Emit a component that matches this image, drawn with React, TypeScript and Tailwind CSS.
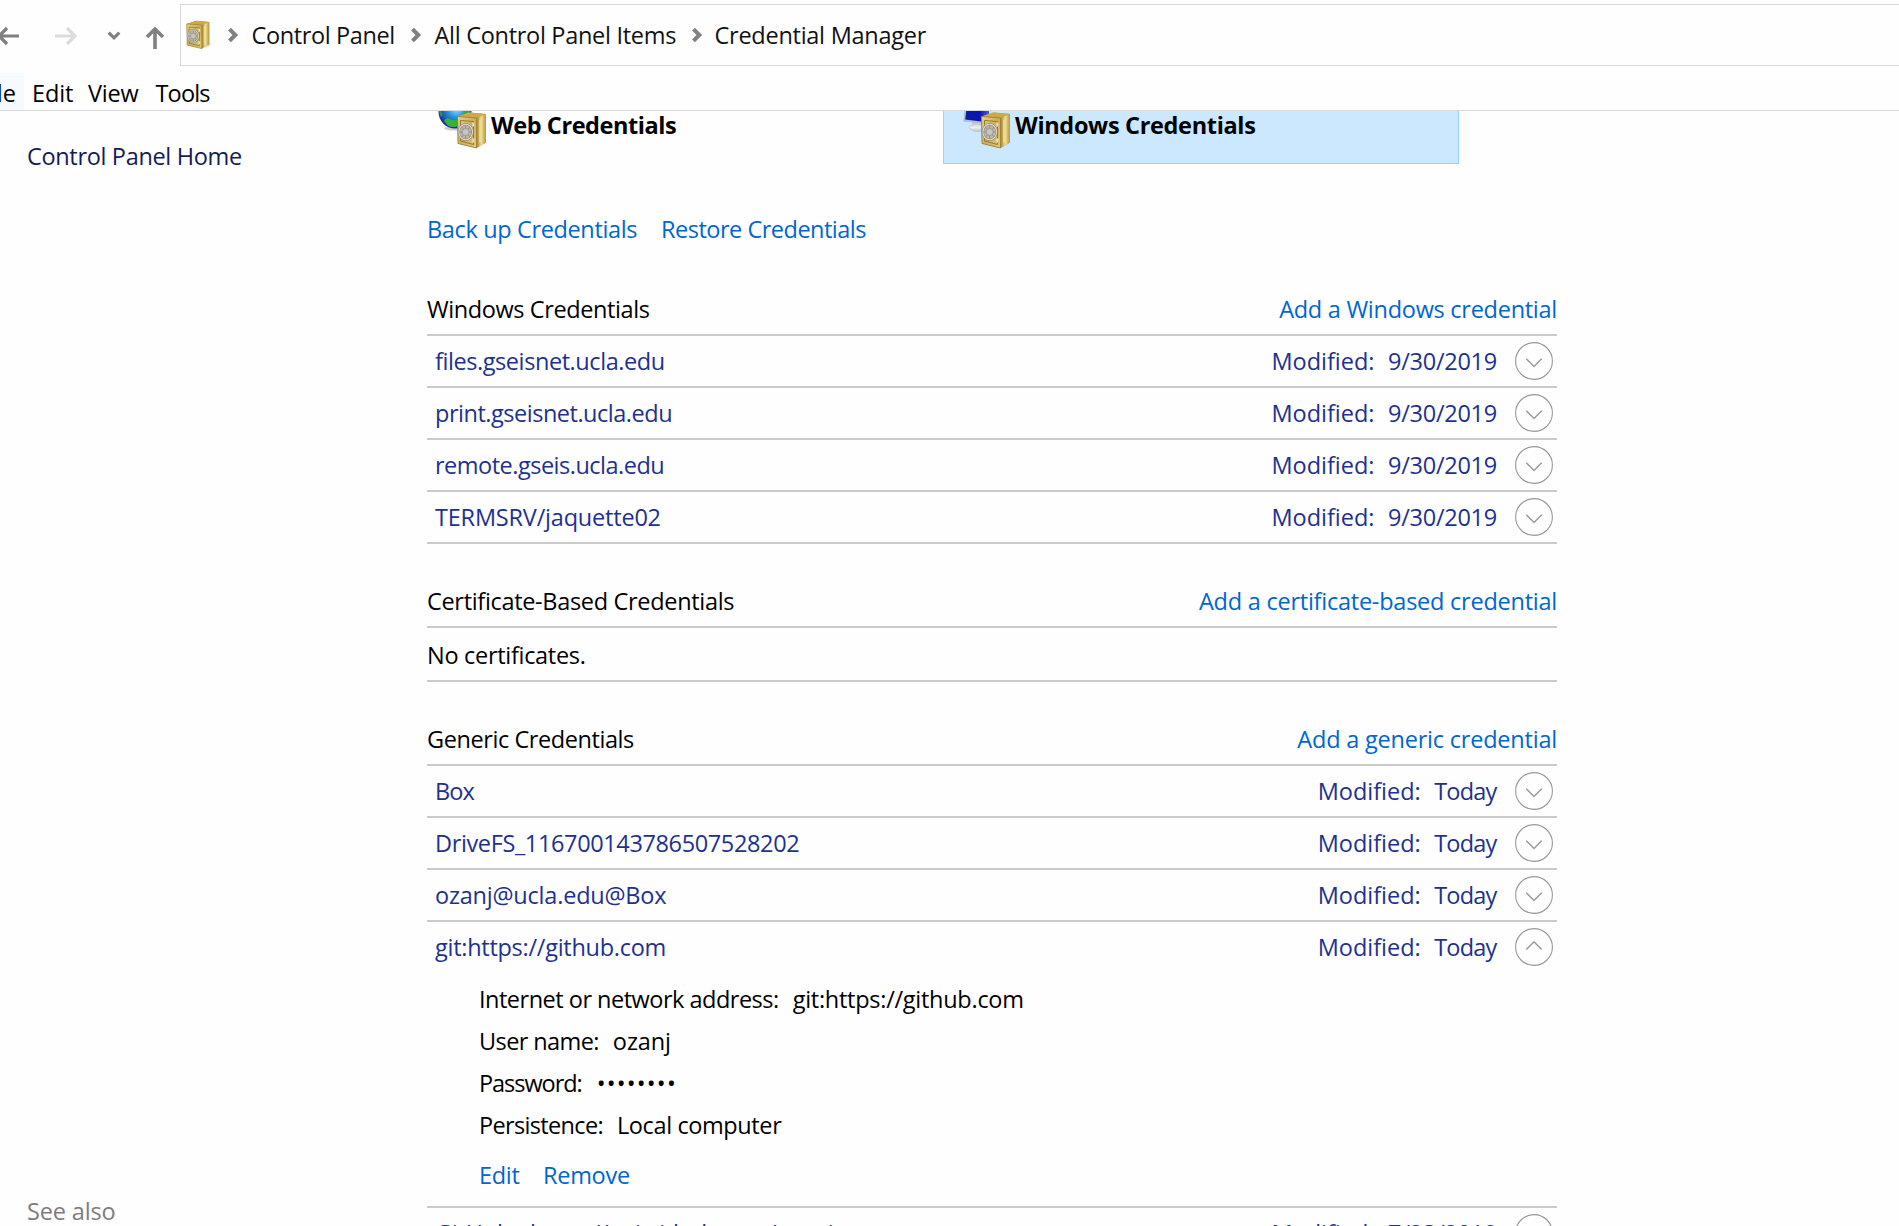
import React from 'react';

type Label = { text: string; tracking: string };

const MODIFIED: Label = { text: 'Modified:', tracking: 'tracking-[-0.02px]' };

/** Golden safe on a 30x37 grid. */
function SafeShape() {
  return (
    <g>
      <path d="M1 5 L14 1 L29.5 2.5 L29.5 31 L20 36.5 L1.5 32 Z" fill="#b8912f" />
      <path d="M1 5 L12 1 L29.5 2.5 L20 6.5 Z" fill="#c9aa4c" />
      <path d="M20 6.5 L29.5 2.5 L29.5 31 L20 36.5 Z" fill="url(#safeSide)" />
      <path d="M1 5 L20 6.5 L20 36.5 L1.5 32 Z" fill="url(#safeFront)" stroke="#9a7b30" strokeWidth="0.8" />
      <path d="M4 9 L17 10 L17 33 L4 29.5 Z" fill="none" stroke="#8b7132" strokeWidth="0.9" />
      <path d="M23.5 8 L23.5 31" stroke="#f3e29a" strokeWidth="1.6" opacity="0.8" />
      <path d="M16.8 11 V15 M16.8 27 V31" stroke="#dedede" strokeWidth="2" />
      <ellipse cx="9.2" cy="20.5" rx="6.8" ry="7.8" fill="#c9b98a" stroke="#868686" strokeWidth="2.2" />
      <ellipse cx="9.2" cy="20.5" rx="6.8" ry="7.8" fill="none" stroke="#dedede" strokeWidth="1.1" />
      <path d="M9.2 13.5 V27.5 M3 20.5 H15.5 M5 15.5 L13.5 25.5 M13.5 15.5 L5 25.5" stroke="#8f8f94" strokeWidth="1" />
      <circle cx="9.2" cy="20.5" r="3.5" fill="#c4c4c9" stroke="#85858a" strokeWidth="0.6" />
    </g>
  );
}

function SharedGradients() {
  return (
    <svg width="0" height="0" className="absolute">
      <defs>
        <linearGradient id="safeFront" x1="0" y1="0" x2="1" y2="1">
          <stop offset="0" stopColor="#e8d483" />
          <stop offset="0.5" stopColor="#cfae55" />
          <stop offset="1" stopColor="#e3cb70" />
        </linearGradient>
        <linearGradient id="safeSide" x1="0" y1="0" x2="1" y2="0">
          <stop offset="0" stopColor="#a17f30" />
          <stop offset="0.5" stopColor="#efdf95" />
          <stop offset="1" stopColor="#b8953f" />
        </linearGradient>
        <radialGradient id="globe" cx="0.55" cy="0.4" r="0.58">
          <stop offset="0" stopColor="#8be6ff" />
          <stop offset="0.45" stopColor="#2596e2" />
          <stop offset="1" stopColor="#1a2f9c" />
        </radialGradient>
        <linearGradient id="screen" x1="0" y1="0" x2="1" y2="0">
          <stop offset="0" stopColor="#0a1e9c" />
          <stop offset="0.6" stopColor="#0a12b8" />
          <stop offset="1" stopColor="#4a5cdc" />
        </linearGradient>
        <linearGradient id="foot" x1="0" y1="0" x2="0" y2="1">
          <stop offset="0" stopColor="#a9adb6" />
          <stop offset="0.6" stopColor="#eceef2" />
          <stop offset="1" stopColor="#bcc0c8" />
        </linearGradient>
      </defs>
    </svg>
  );
}

function WebSafeIcon() {
  return (
    <svg width="49" height="38" viewBox="0 0 49 38" className="shrink-0">
      <ellipse cx="18" cy="17.5" rx="12" ry="2" fill="#9a9a9a" opacity="0.5" />
      <circle cx="17" cy="1" r="16.5" fill="url(#globe)" />
      <path d="M1 -1 L3 0 L4.5 3 L3.5 6 Q1.5 4 1 0 Z" fill="#2f9a3a" />
      <path d="M6 10 Q8 6 12 8 Q15 10 19 9 V15.5 Q14 17 9.5 14.5 Q8 12 6 10 Z" fill="#35b23c" />
      <path d="M25 0 H32 L31 3 L26 3 Z" fill="#3aa544" />
      <g transform="translate(18.5 0.5)">
        <SafeShape />
      </g>
    </svg>
  );
}

function WindowsSafeIcon() {
  return (
    <svg width="49" height="38" viewBox="0 0 49 38" className="shrink-0">
      <path d="M10 10 L18 11 L19 20 Q12 22 7 18 Q4.5 15.5 9 14 Z" fill="url(#foot)" stroke="#b3b8c2" strokeWidth="0.5" />
      <path d="M1.2 0 L26 0 L26 13 L0.4 10.5 Z" fill="#aebedb" />
      <path d="M3.2 0 L26 0 L26 11.5 L2.2 8.6 Z" fill="url(#screen)" />
      <g transform="translate(17.5 0.5)">
        <SafeShape />
      </g>
    </svg>
  );
}

function CrumbChevron() {
  return (
    <svg width="11" height="16" viewBox="0 0 11 16" className="shrink-0">
      <path d="M1.5 2.2 L7.3 8 L1.5 13.8" fill="none" stroke="#808080" strokeWidth="4" />
    </svg>
  );
}

function Toggle({ open = false }: { open?: boolean }) {
  return (
    <svg width="38" height="38" viewBox="0 0 38 38" className="mr-1 shrink-0">
      <circle cx="19" cy="19" r="18.4" fill="none" stroke="#999" strokeWidth="1.1" />
      <path
        d={open ? 'M11.3 21.5 L19 13.7 L26.7 21.5' : 'M11.3 16.7 L19 24.5 L26.7 16.7'}
        fill="none"
        stroke="#999"
        strokeWidth="1.5"
      />
    </svg>
  );
}

function CredentialRow({ name, date, open = false, children }: { name: Label; date: Label; open?: boolean; children?: React.ReactNode }) {
  return (
    <div className="border-b-2 border-[#cbcbcb]">
      <div className="flex h-[50px] items-center pl-2 text-[#1f318f]">
        <span className={name.tracking}>{name.text}</span>
        <span className={`mr-[13.5px] ml-auto ${MODIFIED.tracking}`}>{MODIFIED.text}</span>
        <span className={date.tracking}>{date.text}</span>
        <Toggle open={open} />
      </div>
      {children}
    </div>
  );
}

function SectionHeader({ title, action }: { title: Label; action: Label }) {
  return (
    <div className="flex h-[43px] items-start justify-between border-b-2 border-[#cbcbcb]">
      <span className={title.tracking}>{title.text}</span>
      <span className={`text-[#0066d0] ${action.tracking}`}>{action.text}</span>
    </div>
  );
}

const SEP30: Label = { text: '9/30/2019', tracking: 'mr-[18px] tracking-[-0.25px]' };
const JUL23: Label = { text: '7/23/2019', tracking: 'mr-[18px] tracking-[-0.25px]' };
const TODAY: Label = { text: 'Today', tracking: 'mr-[18.5px] tracking-[-0.8px]' };

const WINDOWS_ROWS: Label[] = [
  { text: 'files.gseisnet.ucla.edu', tracking: 'tracking-[-0.43px]' },
  { text: 'print.gseisnet.ucla.edu', tracking: 'tracking-[-0.48px]' },
  { text: 'remote.gseis.ucla.edu', tracking: 'tracking-[-0.5px]' },
  { text: 'TERMSRV/jaquette02', tracking: 'tracking-[-0.2px]' },
];

const GENERIC_ROWS: Label[] = [
  { text: 'Box', tracking: 'tracking-[-0.9px]' },
  { text: 'DriveFS_116700143786507528202', tracking: 'tracking-[-0.37px]' },
  { text: 'ozanj@ucla.edu@Box', tracking: 'tracking-[-0.21px]' },
];

const DETAILS: { label: Label; value: Label }[] = [
  {
    label: { text: 'Internet or network address:', tracking: 'tracking-[-0.5px]' },
    value: { text: 'git:https://github.com', tracking: 'tracking-[-0.27px]' },
  },
  {
    label: { text: 'User name:', tracking: 'tracking-[-0.6px]' },
    value: { text: 'ozanj', tracking: 'tracking-[-0.1px]' },
  },
  {
    label: { text: 'Password:', tracking: 'tracking-[-1.05px]' },
    value: { text: '••••••••', tracking: 'ml-px tracking-[1.2px]' },
  },
  {
    label: { text: 'Persistence:', tracking: 'tracking-[-0.66px]' },
    value: { text: 'Local computer', tracking: 'tracking-[-0.39px]' },
  },
];

function AddressBar() {
  return (
    <div className="flex h-[73px] shrink-0 items-start">
      <div className="flex w-[180px] shrink-0 items-start pt-[25px]">
        <svg width="180" height="26" viewBox="0 0 180 26" fill="none" strokeWidth="3.2">
          <path d="M19 11 H-2 M7 3 L-1 11 L7 19" stroke="#808080" />
          <path d="M55 11 H75 M67 3 L75 11 L67 19" stroke="#dcdcdc" />
          <path d="M108.7 7.7 L114 12.8 L119.3 7.7" stroke="#808080" />
          <path d="M155 24 V4 M147 12 L155 4 L163 12" stroke="#808080" strokeWidth="3.6" />
        </svg>
      </div>
      <div className="mt-1 flex h-[62px] flex-1 items-center border-y border-l border-[#d9d9d9] text-[#111]">
        <svg width="27" height="29" viewBox="0 0 33 37" preserveAspectRatio="none" className="-mt-0.5 ml-[5px] w-[26px] shrink-0">
          <path d="M29 31 L33 27 L30 34 L22 36 Z" fill="#e4e4e4" />
          <SafeShape />
        </svg>
        <div className="ml-[15.5px] flex w-6 shrink-0">
          <CrumbChevron />
        </div>
        <span className="w-[159px] shrink-0 tracking-[-0.38px]">Control Panel</span>
        <div className="flex w-6 shrink-0">
          <CrumbChevron />
        </div>
        <span className="w-[257px] shrink-0 tracking-[-0.29px]">All Control Panel Items</span>
        <div className="flex w-[23px] shrink-0">
          <CrumbChevron />
        </div>
        <span className="tracking-[-0.26px]">Credential Manager</span>
      </div>
    </div>
  );
}

function MenuBar() {
  return (
    <div className="flex h-[38px] shrink-0 items-stretch border-b border-[#d9d9d9] leading-[40px]">
      <div className="flex w-6 justify-end overflow-hidden bg-[#f5faff] pr-2">
        <span>File</span>
      </div>
      <span className="w-[64px] pl-2 tracking-[-0.1px]">Edit</span>
      <span className="w-[67.5px] tracking-[-0.23px]">View</span>
      <span className="tracking-[-0.85px]">Tools</span>
    </div>
  );
}

export default function App() {
  return (
    <div className="flex h-[1226px] w-[1899px] flex-col overflow-hidden bg-[#fefefe] font-['Open_Sans',sans-serif] text-[23.5px] leading-8 whitespace-nowrap text-black">
      <SharedGradients />
      <AddressBar />
      <MenuBar />
      <div className="flex min-h-0 flex-1">
        <aside className="flex w-[427px] shrink-0 flex-col justify-between pt-[29px] pl-[27px]">
          <span className="tracking-[-0.33px] text-[#151c55]">Control Panel Home</span>
          <span className="-mb-px tracking-[-0.15px] text-[#7d7d7d]">See also</span>
        </aside>
        <main className="w-[1130px] shrink-0">
          <div className="flex h-[53px] w-[1032px] justify-between leading-7 font-bold">
            <div className="flex items-start pl-[11px]">
              <WebSafeIcon />
              <span className="ml-1 tracking-[-0.43px]">Web Credentials</span>
            </div>
            <div className="flex w-[516px] items-start border-x border-b border-[#99d1ff] bg-[#cce8ff] pl-[19px]">
              <WindowsSafeIcon />
              <span className="ml-[3px] tracking-[-0.33px]">Windows Credentials</span>
            </div>
          </div>

          <div className="mt-[49px] flex gap-6 text-[#0066d0]">
            <span className="tracking-[-0.36px]">Back up Credentials</span>
            <span className="tracking-[-0.5px]">Restore Credentials</span>
          </div>

          <section className="mt-12">
            <SectionHeader
              title={{ text: 'Windows Credentials', tracking: 'tracking-[-0.4px]' }}
              action={{ text: 'Add a Windows credential', tracking: 'tracking-[-0.27px]' }}
            />
            {WINDOWS_ROWS.map((row) => (
              <CredentialRow key={row.text} name={row} date={SEP30} />
            ))}
          </section>

          <section className="mt-[41px]">
            <SectionHeader
              title={{ text: 'Certificate-Based Credentials', tracking: 'tracking-[-0.32px]' }}
              action={{ text: 'Add a certificate-based credential', tracking: 'tracking-[-0.24px]' }}
            />
            <div className="h-[54px] border-b-2 border-[#cbcbcb] pt-[11px] tracking-[-0.3px]">No certificates.</div>
          </section>

          <section className="mt-[41px]">
            <SectionHeader
              title={{ text: 'Generic Credentials', tracking: 'tracking-[-0.42px]' }}
              action={{ text: 'Add a generic credential', tracking: 'tracking-[-0.21px]' }}
            />
            {GENERIC_ROWS.map((row) => (
              <CredentialRow key={row.text} name={row} date={TODAY} />
            ))}
            <CredentialRow name={{ text: 'git:https://github.com', tracking: 'tracking-[-0.27px]' }} date={TODAY} open>
              <div className="pt-1.5 pb-[15px] pl-[52px]">
                {DETAILS.map(({ label, value }) => (
                  <div key={label.text} className="flex h-[42px] items-center gap-3.5">
                    <span className={label.tracking}>{label.text}</span>
                    <span className={value.tracking}>{value.text}</span>
                  </div>
                ))}
                <div className="mt-[13px] flex gap-[23.5px] text-[#0066d0]">
                  <span className="tracking-[-0.3px]">Edit</span>
                  <span className="tracking-[-0.3px]">Remove</span>
                </div>
              </div>
            </CredentialRow>
            <CredentialRow name={{ text: 'GitHub - https://api.github.com/ozanj', tracking: 'tracking-[-0.25px]' }} date={JUL23} />
          </section>
        </main>
      </div>
    </div>
  );
}
